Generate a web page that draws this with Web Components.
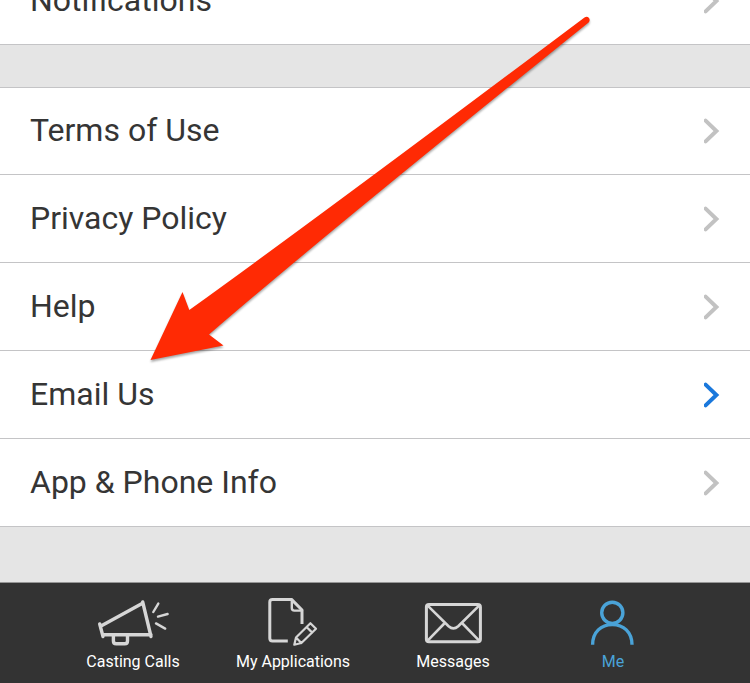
<!DOCTYPE html>
<html lang="en">
<head>
  <meta charset="utf-8">
  <meta name="viewport" content="width=device-width, initial-scale=1">
  <title>Me</title>
  <style>
    body {
      margin: 0;
      font-family: Roboto, "Liberation Sans", sans-serif;
      color: #353535;
      background: #e5e5e5;
    }
  </style>
</head>
<body>
  <settings-screen>
    <menu-group>
      <menu-row href="#notifications">Notifications</menu-row>
    </menu-group>
    <menu-group>
      <menu-row href="#terms">Terms of Use</menu-row>
      <menu-row href="#privacy">Privacy Policy</menu-row>
      <menu-row href="#help">Help</menu-row>
      <menu-row href="#email" active>Email Us</menu-row>
      <menu-row href="#info">App &amp; Phone Info</menu-row>
    </menu-group>
    <pointer-arrow slot="overlay"></pointer-arrow>
    <tab-bar slot="tabs">
      <tab-item href="#casting" icon="megaphone">Casting Calls</tab-item>
      <tab-item href="#applications" icon="document">My Applications</tab-item>
      <tab-item href="#messages" icon="envelope">Messages</tab-item>
      <tab-item href="#me" icon="person" selected>Me</tab-item>
    </tab-bar>
  </settings-screen>

  <script>
    const icons = {
      megaphone: `
        <path stroke-width="3.4" d="M6.7 28 L10 40.5 M8 30 L50 7 M49.7 6 L58 40.5 M9.5 38.8 H58"/>
        <path stroke-width="3.4" d="M20.4 39 V45 Q20.4 47.8 23.2 47.8 H31.7 Q34.5 47.8 34.5 45 V39"/>
        <path stroke-width="2.4" d="M60.3 16 L65.3 7.6 M65 20.6 L74.6 18 M63 27.4 L72.2 32.6"/>`,
      document: `
        <path stroke-linecap="butt" d="M34.8 45 H19.5 Q16.8 45 16.8 42.3 V6 Q16.8 3.4 19.5 3.4 H38.5 L49 14 V28"/>
        <path stroke-width="2.4" d="M38.8 4 V12 Q38.8 14.6 41.4 14.6 H49"/>
        <path stroke-width="2.2" d="M41.3 48.7 L43 41.5 L57.4 27.2 L63 32.8 L48.4 47 Z M43 41.5 L48.4 47 M53.6 31 L59.2 36.6"/>`,
      envelope: `
        <rect x="13.4" y="8.4" width="54" height="37.4" rx="2.6"/>
        <path stroke-width="2.6" d="M14.4 9.4 L35.6 30.2 Q40.4 34.6 45.2 30.2 L66.4 9.4 M14.4 44.8 L31.8 27 M66.4 44.8 L49 27"/>`,
      person: `
        <circle cx="39.3" cy="16.8" r="10.6" stroke-width="3.4"/>
        <path stroke-width="3.4" stroke-linecap="butt" d="M19.6 48.8 C19.6 36 28.2 28.6 39.3 28.6 S59 36 59 48.8"/>`
    };

    class SettingsScreen extends HTMLElement {
      constructor() {
        super();
        const shadow = this.attachShadow({ mode: 'open' });

        shadow.innerHTML = `
          <style>
            :host {
              display: flex;
              flex-direction: column;
              height: 100vh;
            }

            /* the list is scrolled to its end */
            main {
              position: relative;
              flex: 1;
              min-height: 0;
              display: flex;
              flex-direction: column;
              justify-content: flex-end;
              gap: 42px;
              padding-bottom: 55px;
              overflow: hidden;
            }
          </style>

          <main>
            <slot></slot>
            <slot name="overlay"></slot>
          </main>
          <slot name="tabs"></slot>
        `;
      }
    }

    class MenuGroup extends HTMLElement {
      constructor() {
        super();
        const shadow = this.attachShadow({ mode: 'open' });

        shadow.innerHTML = `
          <style>
            :host {
              display: block;
              flex: none;
              background: white;
            }

            ::slotted(:first-child) {
              border-top: 1px solid #c4c4c6;
            }
          </style>

          <nav><slot></slot></nav>
        `;
      }
    }

    class MenuRow extends HTMLElement {
      constructor() {
        super();
        const shadow = this.attachShadow({ mode: 'open' });

        shadow.innerHTML = `
          <style>
            :host {
              display: flex;
              box-sizing: border-box;
              height: 88px;
              border-bottom: 1px solid #c4c4c6;
              --chevron: #c2c2c2;
            }

            :host([active]) {
              --chevron: #1a78dc;
            }

            a {
              flex: 1;
              display: flex;
              align-items: center;
              justify-content: space-between;
              padding: 0 30px;
              font-size: 32px;
              line-height: 40px;
              color: inherit;
              text-decoration: none;
            }

            span {
              padding-bottom: 2px;
            }

            svg {
              width: 16px;
              height: 26px;
              fill: none;
              stroke: var(--chevron);
              stroke-width: 4;
              stroke-linecap: round;
            }
          </style>

          <a href="${this.getAttribute('href')}">
            <span><slot></slot></span>
            <svg viewBox="0 0 16 26" aria-hidden="true"><path d="M1.6 2.6 L12.4 13 L1.6 23.4"/></svg>
          </a>
        `;
      }
    }

    class TabBar extends HTMLElement {
      constructor() {
        super();
        const shadow = this.attachShadow({ mode: 'open' });

        shadow.innerHTML = `
          <style>
            :host {
              display: block;
              flex: none;
              border-top: 1px solid #969696;
              background: #333;
            }

            nav {
              display: flex;
              padding: 0 57px 0 53px;
            }
          </style>

          <nav><slot></slot></nav>
        `;
      }
    }

    class TabItem extends HTMLElement {
      constructor() {
        super();
        const shadow = this.attachShadow({ mode: 'open' });

        shadow.innerHTML = `
          <style>
            :host {
              display: block;
              flex: 1 1 0;
              color: white;
              --icon: #d6d6d6;
            }

            :host([selected]) {
              color: #4aa3d8;
              --icon: #4aa3d8;
            }

            a {
              display: flex;
              flex-direction: column;
              align-items: center;
              gap: 4px;
              padding: 13px 0 11px;
              font-size: 16px;
              line-height: 20px;
              white-space: nowrap;
              color: inherit;
              text-decoration: none;
            }

            svg {
              width: 80px;
              height: 52px;
              fill: none;
              stroke: var(--icon);
              stroke-width: 3;
              stroke-linecap: round;
              stroke-linejoin: round;
            }
          </style>

          <a href="${this.getAttribute('href')}">
            <svg viewBox="0 0 80 52" aria-hidden="true">${icons[this.getAttribute('icon')]}</svg>
            <span><slot></slot></span>
          </a>
        `;
      }
    }

    class PointerArrow extends HTMLElement {
      constructor() {
        super();
        const shadow = this.attachShadow({ mode: 'open' });

        shadow.innerHTML = `
          <style>
            /* floats over the rows, its tip by the email row */
            :host {
              position: absolute;
              left: 140px;
              top: 10px;
              pointer-events: none;
            }

            svg {
              display: block;
              width: 460px;
              height: 360px;
              fill: #ff2a04;
              filter: drop-shadow(0 2px 1px rgba(0, 0, 0, 0.35));
            }
          </style>

          <svg viewBox="140 10 460 360" aria-hidden="true">
            <path d="M150.5 360 L182.5 292 L189.3 310 Q320 216 584.5 17.4 C588 14.8 591.5 19.4 588.6 22.4 Q320 238.5 209 334.6 L223.5 345.5 Z"/>
          </svg>
        `;
      }
    }

    customElements.define('settings-screen', SettingsScreen);
    customElements.define('menu-group', MenuGroup);
    customElements.define('menu-row', MenuRow);
    customElements.define('tab-bar', TabBar);
    customElements.define('tab-item', TabItem);
    customElements.define('pointer-arrow', PointerArrow);
  </script>
</body>
</html>
